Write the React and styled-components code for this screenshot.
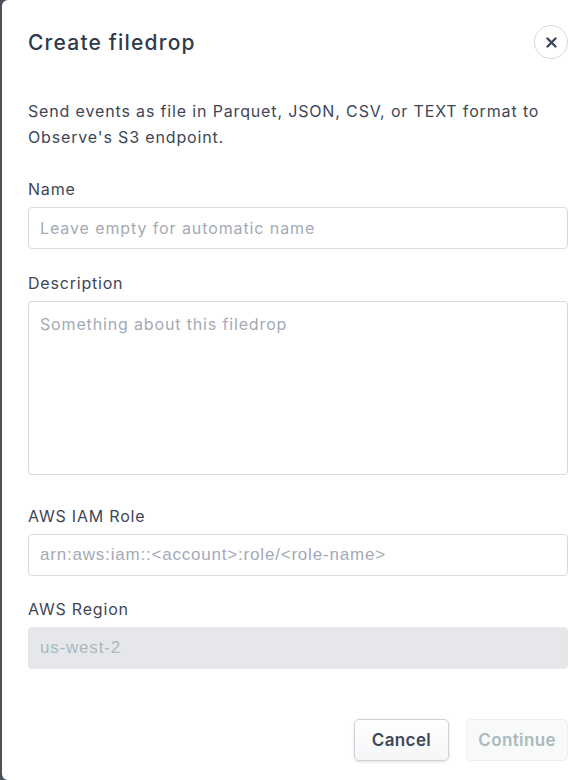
import React from "react";
import styled, { createGlobalStyle } from "styled-components";

const Global = createGlobalStyle`
  html, body { margin: 0; padding: 0; background: #4b525b; }
  body { font-family: Inter, "Noto Sans", sans-serif; }
  * { box-sizing: border-box; }
`;

const Backdrop = styled.div`
  height: 780px;
  padding-left: 2px;
  background: #4b525b;
`;

const Dialog = styled.div`
  height: 780px;
  background: #ffffff;
  border-top-left-radius: 6px;
  border-bottom-left-radius: 6px;
  padding: 25px 20px 0 26px;
  display: flex;
  flex-direction: column;
  color: #3d4757;
`;

const Header = styled.div`
  display: flex;
  align-items: center;
  justify-content: space-between;
  height: 34px;
`;

const Title = styled.h2`
  margin: 0;
  font-size: 21px;
  font-weight: 500;
  color: #2f3a4a;
  letter-spacing: 1.2px;
`;

const CloseButton = styled.button`
  width: 34px;
  height: 34px;
  border-radius: 50%;
  border: 1px solid #d6d9de;
  background: #fff;
  display: flex;
  align-items: center;
  justify-content: center;
  padding: 0;
  cursor: pointer;
`;

const Intro = styled.p`
  margin: 39px 0 0;
  font-size: 16px;
  line-height: 26px;
  letter-spacing: 0.85px;
  color: #3d4757;
`;

const Field = styled.div`
  margin-top: ${(p) => p.$gap}px;
  display: flex;
  flex-direction: column;
`;

const Label = styled.label`
  font-size: 16px;
  line-height: 22px;
  letter-spacing: 0.8px;
  color: #3d4757;
  margin-bottom: 7px;
`;

const TextInput = styled.input`
  display: block;
  width: 100%;
  height: 42px;
  border: 1px solid ${(p) => (p.disabled ? "#e4e6ea" : "#d8dbe0")};
  border-radius: 4px;
  background: ${(p) => (p.disabled ? "#e5e7eb" : "#fff")};
  padding: 0 11px;
  font-family: ${(p) => (p.$mono ? '"Liberation Sans", Arial, sans-serif' : 'Inter, "Noto Sans", sans-serif')};
  font-size: ${(p) => (p.$mono ? 17 : 16)}px;
  letter-spacing: ${(p) => (p.$mono ? 0.8 : 0.9)}px;
  color: #3d4757;
  outline: none;
  &::placeholder { color: ${(p) => (p.disabled ? "#a9b9bf" : "#a3aab6")}; opacity: 1; }
`;

const TextArea = styled.textarea`
  display: block;
  width: 100%;
  height: 174px;
  border: 1px solid #d8dbe0;
  border-radius: 4px;
  padding: 11px 11px;
  font-family: Inter, "Noto Sans", sans-serif;
  font-size: 16px;
  line-height: 22px;
  letter-spacing: 0.85px;
  resize: none;
  outline: none;
  &::placeholder { color: #a3aab6; opacity: 1; }
`;

const Footer = styled.div`
  margin-top: 50px;
  display: flex;
  justify-content: flex-end;
  gap: 17px;
`;

const Button = styled.button`
  height: 42px;
  padding: 0 ${(p) => (p.$primary ? 11 : 17)}px;
  border-radius: 5px;
  font-family: Inter, "Noto Sans", sans-serif;
  font-size: 17px;
  font-weight: 600;
  letter-spacing: 0.4px;
  cursor: pointer;
  ${(p) =>
    p.$primary
      ? `
    color: #a8b9c0;
    background: #f8fafa;
    border: 1px solid #eceff1;
  `
      : `
    color: #3d4757;
    background: linear-gradient(#ffffff, #f4f6f7);
    border: 1px solid #cfd3d9;
    box-shadow: 0 1px 3px rgba(0,0,0,0.12);
  `}
`;

export default function App() {
  return (
    <>
      <Global />
      <Backdrop>
        <Dialog>
          <Header>
            <Title>Create filedrop</Title>
            <CloseButton aria-label="Close">
              <svg width="11" height="11" viewBox="0 0 11 11">
                <path d="M1.5 1.5 L9.5 9.5 M9.5 1.5 L1.5 9.5" stroke="#3d4757" strokeWidth="2.4" strokeLinecap="round" />
              </svg>
            </CloseButton>
          </Header>
          <Intro>
            Send events as file in Parquet, JSON, CSV, or TEXT format to Observe's S3 endpoint.
          </Intro>
          <Field $gap={28}>
            <Label>Name</Label>
            <TextInput placeholder="Leave empty for automatic name" />
          </Field>
          <Field $gap={23}>
            <Label>Description</Label>
            <TextArea placeholder="Something about this filedrop" />
          </Field>
          <Field $gap={30}>
            <Label>AWS IAM Role</Label>
            <TextInput $mono placeholder="arn:aws:iam::<account>:role/<role-name>" />
          </Field>
          <Field $gap={22}>
            <Label>AWS Region</Label>
            <TextInput $mono disabled placeholder="us-west-2" />
          </Field>
          <Footer>
            <Button>Cancel</Button>
            <Button $primary disabled>Continue</Button>
          </Footer>
        </Dialog>
      </Backdrop>
    </>
  );
}
